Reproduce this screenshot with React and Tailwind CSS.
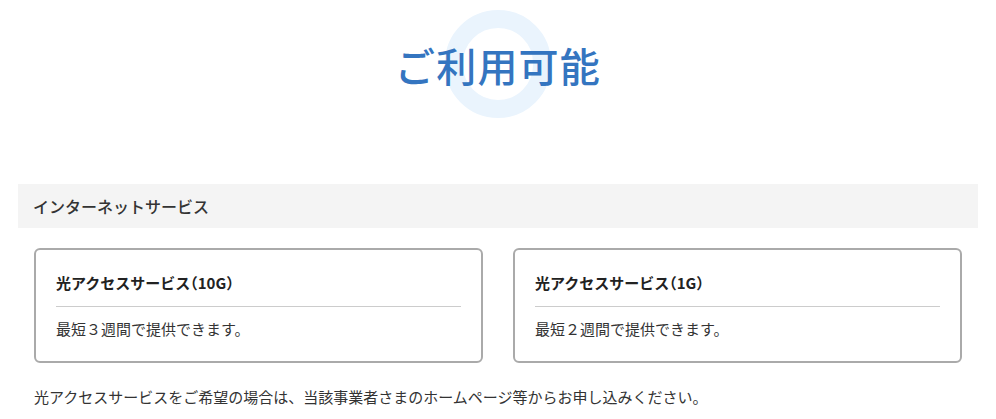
import React from 'react';

const services = [
  { name: '光アクセスサービス（10G）', lead: '最短３週間で提供できます。' },
  { name: '光アクセスサービス（1G）', lead: '最短２週間で提供できます。' },
];

export default function App() {
  return (
    <div className="min-h-screen bg-white text-[#333] font-['Noto_Sans_CJK_JP','Noto_Sans',sans-serif]">
      <div className="mx-auto w-[960px]">
        {/* Heading with ring behind it */}
        <div className="relative flex justify-center pt-[35px] h-[184px]">
          <span className="absolute left-[427px] top-[10px] w-[106px] h-[108px] rounded-full border-[18px] border-[#eaf4fd]"></span>
          <h1 className="relative text-[40px] leading-[60px] font-medium text-[#3475c0] tracking-[0.03em]">ご利用可能</h1>
        </div>

        {/* Section */}
        <div className="bg-[#f4f4f4] h-[44px] flex items-center px-[15px]">
          <h2 className="text-[16px] font-medium text-[#333]">インターネットサービス</h2>
        </div>

        <div className="px-[16px] pt-[20px]">
          <div className="grid grid-cols-2 gap-[30px]">
            {services.map((s) => (
              <div key={s.name} className="h-[115px] border-2 border-[#aaa] rounded-[6px] px-[20px] pt-[22px]">
                <p className="text-[15px] leading-[22px] font-bold text-[#222] pb-[12px] border-b border-[#ccc] [font-feature-settings:'halt']">{s.name}</p>
                <p className="text-[15px] leading-[22px] pt-[11px] text-[#333]">{s.lead}</p>
              </div>
            ))}
          </div>
          <p className="text-[15px] leading-[22px] pt-[23px]">光アクセスサービスをご希望の場合は、当該事業者さまのホームページ等からお申し込みください。</p>
        </div>
      </div>
    </div>
  );
}
